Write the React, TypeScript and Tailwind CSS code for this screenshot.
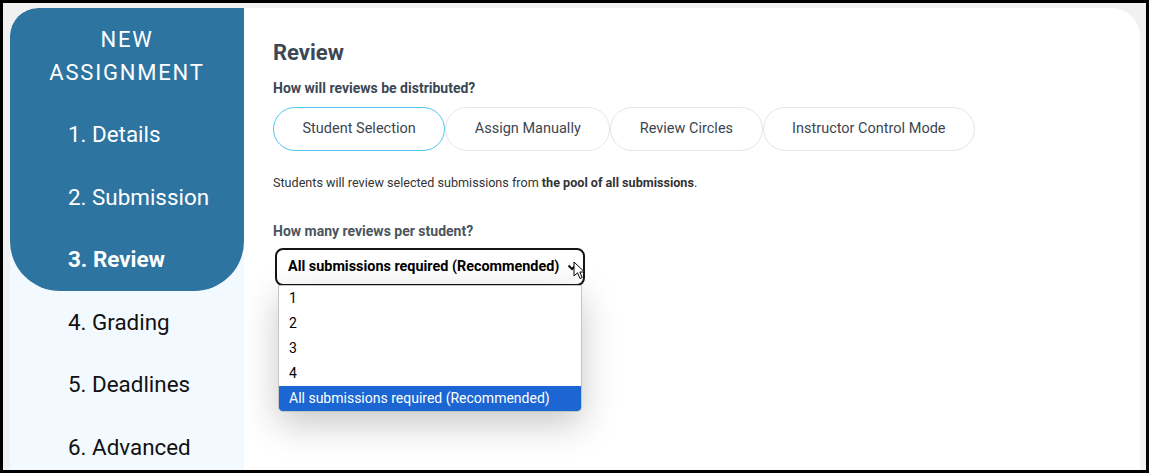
import React from "react";

const steps = [
  "1. Details",
  "2. Submission",
  "3. Review",
  "4. Grading",
  "5. Deadlines",
  "6. Advanced",
];

const modes = [
  "Student Selection",
  "Assign Manually",
  "Review Circles",
  "Instructor Control Mode",
];

const options = ["1", "2", "3", "4", "All submissions required (Recommended)"];

const Sidebar = () => {
  return (
    <aside className="flex w-[234px] shrink-0 flex-col bg-[#f3faff]">
      <div className="shrink-0 rounded-tl-[28px] rounded-b-[50px] bg-[#2e74a1] pt-[14.5px] text-white">
        <div className="text-center text-[22px] leading-[33px] tracking-[1.8px]">
          <div>NEW</div>
          <div>ASSIGNMENT</div>
        </div>
        <div className="mt-[15.25px]">
          {steps.slice(0, 3).map((s, i) => (
            <div
              key={s}
              className={`flex h-[62.5px] shrink-0 items-center pl-[58px] text-[22.4px] ${
                i === 2 ? "font-bold" : ""
              }`}
            >
              {s}
            </div>
          ))}
        </div>
      </div>
      {steps.slice(3).map((s) => (
        <div
          key={s}
          className="flex h-[62.5px] shrink-0 items-center pl-[58px] text-[22.4px] text-[#111]"
        >
          {s}
        </div>
      ))}
    </aside>
  );
};

const ReviewPanel = () => {
  return (
    <main className="relative flex-1 bg-white pl-[29px] pt-[32px] text-[#3b4754]">
      <h2 className="text-[22px] leading-[26px] font-bold">Review</h2>
      <p className="mt-[14px] text-[14px] leading-[16px] font-bold">
        How will reviews be distributed?
      </p>
      <div className="mt-[11px] flex">
        {modes.map((m, i) => (
          <button
            key={m}
            type="button"
            className={`h-[44px] rounded-full border bg-white px-[28.5px] text-[14.5px] text-[#3d4650] ${
              i === 0 ? "border-[#55c5f2]" : "border-[#e6e6e6]"
            }`}
          >
            {m}
          </button>
        ))}
      </div>
      <p className="mt-[24px] text-[12.6px] leading-[16px] text-[#333]">
        Students will review selected submissions from{" "}
        <span className="font-bold">the pool of all submissions</span>.
      </p>
      <p className="mt-[32px] text-[14px] leading-[16px] font-bold text-[#4a5560]">
        How many reviews per student?
      </p>
      <div className="relative mt-[9px] ml-[2px] w-[310px]">
        <div className="flex h-[38px] items-center justify-between rounded-[8px] border-2 border-[#151515] bg-white pr-[6px] pl-[11px] text-[14.4px] font-bold text-black">
          <span>All submissions required (Recommended)</span>
          <svg width="10" height="7" viewBox="0 0 10 7" className="mt-[1px]">
            <path
              d="M1.5 1.5 L5 5 L8.5 1.5"
              fill="none"
              stroke="#111"
              strokeWidth="2"
            />
          </svg>
        </div>
        <div className="absolute top-[37px] left-[3px] w-[304px] overflow-hidden rounded-b-[5px] border border-[#c4c4c4] bg-white shadow-[0_12px_36px_rgba(0,0,0,0.22)]">
          {options.map((o, i) => (
            <div
              key={o}
              className={`flex h-[25px] items-center pl-[10px] text-[14px] ${
                i === 4 ? "bg-[#1b66d2] text-white" : "text-black"
              }`}
            >
              {o}
            </div>
          ))}
        </div>
        <svg
          width="14"
          height="20"
          viewBox="0 0 14 20"
          className="absolute top-[13px] left-[298px]"
        >
          <path
            d="M1 1 L1 15 L4.5 11.8 L7 17.5 L9.2 16.5 L6.8 11 L11.5 11 Z"
            fill="#fff"
            stroke="#000"
            strokeWidth="1"
            strokeLinejoin="round"
          />
        </svg>
      </div>
    </main>
  );
};

export default function App() {
  return (
    <div className="h-[473px] w-[1149px] overflow-hidden border-[3px] border-black bg-[#f1f1f1] pt-[5px] pr-[6px] pl-[7px] font-['Roboto',sans-serif]">
      <div className="flex h-[462px] overflow-hidden rounded-t-[28px]">
        <Sidebar />
        <ReviewPanel />
      </div>
    </div>
  );
}
